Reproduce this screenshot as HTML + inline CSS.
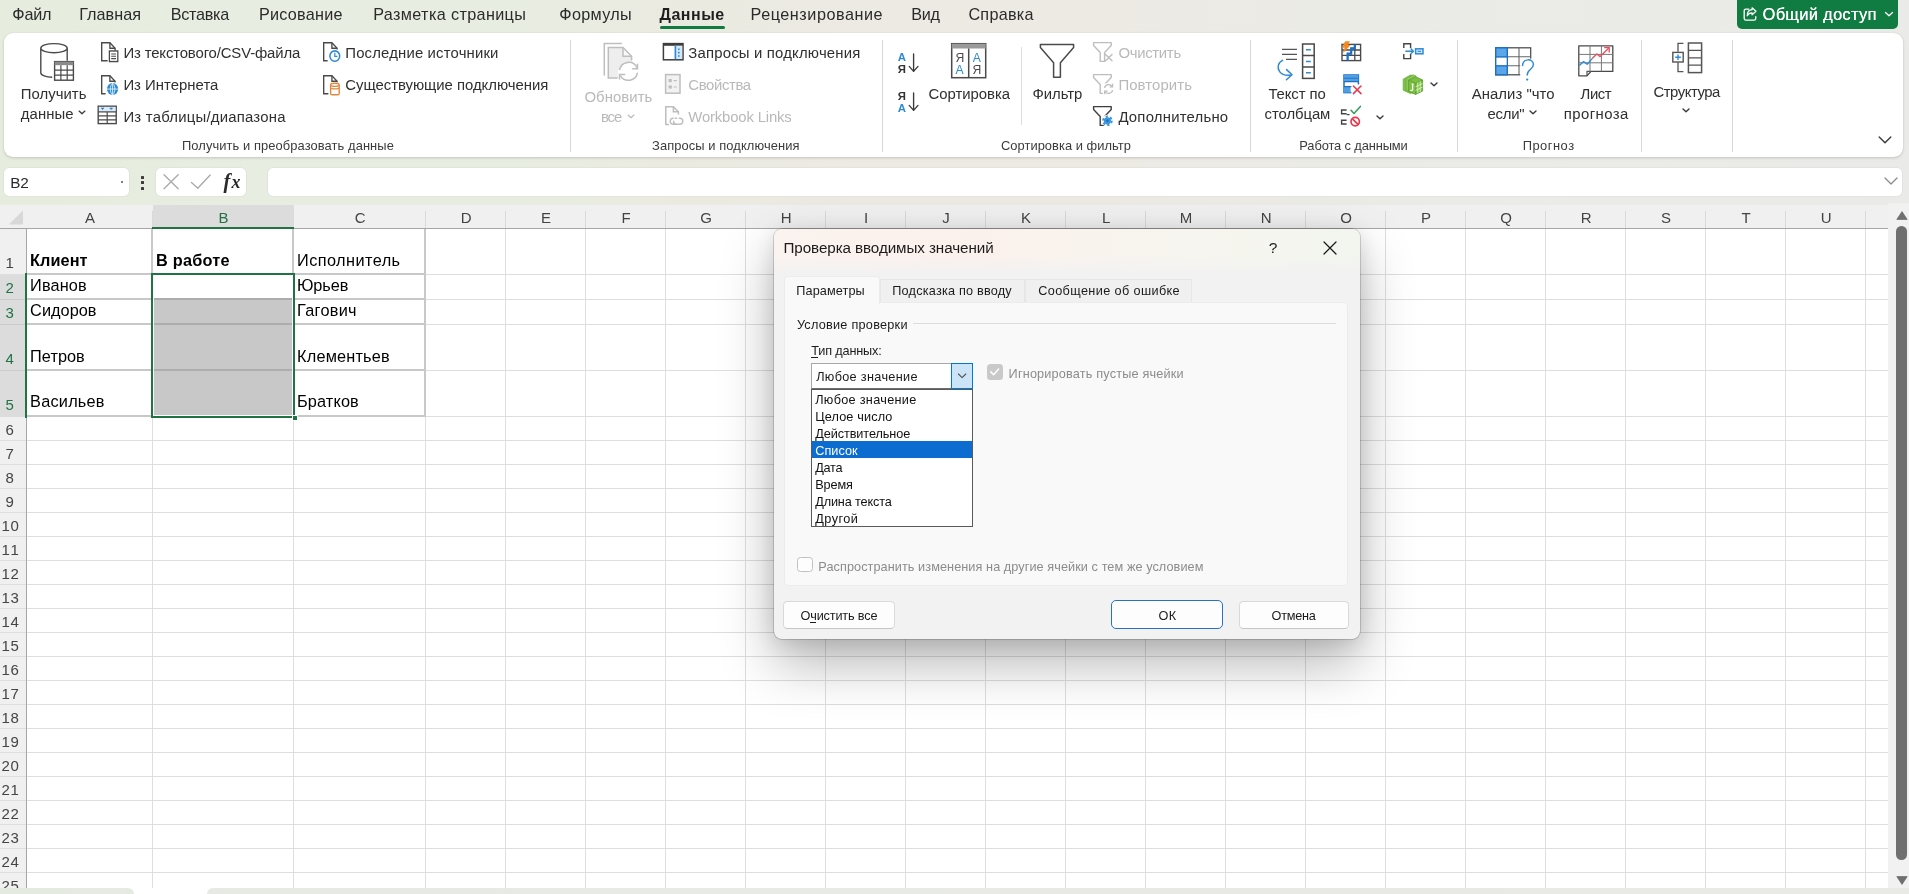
<!DOCTYPE html>
<html><head><meta charset="utf-8"><title>Excel</title>
<style>
html,body{margin:0;padding:0;}
body{width:1909px;height:894px;overflow:hidden;position:relative;background:#e9eee4;font-family:"Liberation Sans",sans-serif;}
.a{position:absolute;box-sizing:border-box;}
.t{position:absolute;white-space:nowrap;}
#w{position:absolute;left:0;top:0;width:1909px;height:894px;overflow:hidden;will-change:transform;}
</style></head><body><div id="w">
<div class="a" style="left:0.00px;top:0.00px;width:1909.00px;height:206.00px;background:linear-gradient(90deg,#e6eddf 0%,#e8ede1 27%,#ebeae1 36%,#edeae3 55%,#ebebe6 70%,#eaebe8 100%);"></div>
<div class="t" style="left:12.30px;top:6.00px;font-size:16.20px;line-height:16.20px;letter-spacing:-0.209px;color:#2b2b2b;font-family:'Liberation Sans',sans-serif;">Файл</div>
<div class="t" style="left:79.20px;top:6.00px;font-size:16.20px;line-height:16.20px;letter-spacing:0.040px;color:#2b2b2b;font-family:'Liberation Sans',sans-serif;">Главная</div>
<div class="t" style="left:170.80px;top:6.00px;font-size:16.20px;line-height:16.20px;letter-spacing:-0.302px;color:#2b2b2b;font-family:'Liberation Sans',sans-serif;">Вставка</div>
<div class="t" style="left:258.90px;top:6.00px;font-size:16.20px;line-height:16.20px;letter-spacing:0.252px;color:#2b2b2b;font-family:'Liberation Sans',sans-serif;">Рисование</div>
<div class="t" style="left:373.20px;top:6.00px;font-size:16.20px;line-height:16.20px;letter-spacing:0.365px;color:#2b2b2b;font-family:'Liberation Sans',sans-serif;">Разметка страницы</div>
<div class="t" style="left:559.30px;top:6.00px;font-size:16.20px;line-height:16.20px;letter-spacing:0.334px;color:#2b2b2b;font-family:'Liberation Sans',sans-serif;">Формулы</div>
<div class="t" style="left:750.50px;top:6.00px;font-size:16.20px;line-height:16.20px;letter-spacing:0.547px;color:#2b2b2b;font-family:'Liberation Sans',sans-serif;">Рецензирование</div>
<div class="t" style="left:911.30px;top:6.00px;font-size:16.20px;line-height:16.20px;letter-spacing:-0.304px;color:#2b2b2b;font-family:'Liberation Sans',sans-serif;">Вид</div>
<div class="t" style="left:968.40px;top:6.00px;font-size:16.20px;line-height:16.20px;letter-spacing:0.275px;color:#2b2b2b;font-family:'Liberation Sans',sans-serif;">Справка</div>
<div class="t" style="left:659.60px;top:7.00px;font-size:16.00px;line-height:16.00px;letter-spacing:0.483px;color:#1f1f1f;font-family:'Liberation Sans',sans-serif;font-weight:bold;">Данные</div>
<div class="a" style="left:659.50px;top:25.90px;width:65.00px;height:3.40px;background:#107c41;border-radius:1.7px;"></div>
<div class="a" style="left:1737.00px;top:-6.00px;width:161.00px;height:34.50px;background:#107c41;border-radius:5px;"></div>
<div class="t" style="left:1762.60px;top:6.00px;font-size:16.30px;line-height:16.30px;letter-spacing:0.389px;color:#ffffff;font-family:'Liberation Sans',sans-serif;text-shadow:0.25px 0 0 #fff;">Общий доступ</div>
<svg class="a" style="left:1741.60px;top:5.60px;" width="16.4" height="16.4" viewBox="0 0 15 15" fill="none"><path d="M6.2 2.8H3.6C2.7 2.8 2 3.5 2 4.4v7c0 .9.7 1.6 1.6 1.6h7.4c.9 0 1.6-.7 1.6-1.6V9.8" stroke="#fff" stroke-width="1.2" stroke-linecap="round"/><path d="M9.2 1.6l3.6 3.2-3.6 3.2V6.2C6.8 6.2 5.6 7.2 4.8 9c0-3.2 1.6-5.4 4.4-5.6z" stroke="#fff" stroke-width="1.1" stroke-linejoin="round"/></svg>
<svg class="a" style="left:1884.00px;top:10.00px;" width="10" height="8" viewBox="0 0 10 8" fill="none"><path d="M1.5 2.5L5 5.8 8.5 2.5" stroke="#fff" stroke-width="1.3" stroke-linecap="round" stroke-linejoin="round"/></svg>
<div class="a" style="left:3.50px;top:33.00px;width:1899.00px;height:124.00px;background:#ffffff;border-radius:9px;box-shadow:0 1px 3px rgba(0,0,0,0.16),0 0 1px rgba(0,0,0,0.10);"></div>
<div class="a" style="left:4.00px;top:168.00px;width:125.30px;height:28.20px;background:#fff;border-radius:5px;box-shadow:0 0 0 0.6px rgba(0,0,0,0.06);"></div>
<div class="t" style="left:10.20px;top:175.00px;font-size:15.30px;line-height:15.30px;letter-spacing:-0.115px;color:#2b2b2b;font-family:'Liberation Sans',sans-serif;">B2</div>
<div class="a" style="left:121.00px;top:181.30px;width:1.60px;height:1.60px;background:#555;border-radius:1px;"></div>
<div class="a" style="left:141.00px;top:176.20px;width:3.00px;height:3.00px;background:#3b3b3b;border-radius:0.6px;"></div>
<div class="a" style="left:141.00px;top:181.40px;width:3.00px;height:3.00px;background:#3b3b3b;border-radius:0.6px;"></div>
<div class="a" style="left:141.00px;top:186.60px;width:3.00px;height:3.00px;background:#3b3b3b;border-radius:0.6px;"></div>
<div class="a" style="left:155.60px;top:168.00px;width:90.60px;height:28.20px;background:#fff;border-radius:5px;box-shadow:0 0 0 0.6px rgba(0,0,0,0.06);"></div>
<svg class="a" style="left:160.00px;top:171.00px;" width="24" height="22" viewBox="0 0 24 22" fill="none"><path d="M4 3.8L18.2 17.8M18.2 3.8L4 17.8" stroke="#a9a9a9" stroke-width="1.3" stroke-linecap="round"/></svg>
<svg class="a" style="left:188.00px;top:171.00px;" width="26" height="22" viewBox="0 0 26 22" fill="none"><path d="M3.5 11.5L9.8 17.2 22.2 4" stroke="#a9a9a9" stroke-width="1.3" stroke-linecap="round" stroke-linejoin="round"/></svg>
<div class="t" style="left:223.40px;top:171.00px;font-size:20.50px;line-height:20.50px;letter-spacing:0.000px;color:#2a2a2a;font-family:'Liberation Serif',serif;font-style:italic;font-weight:bold;">f</div>
<div class="t" style="left:231.40px;top:173.00px;font-size:18.00px;line-height:18.00px;letter-spacing:0.000px;color:#2a2a2a;font-family:'Liberation Serif',serif;font-style:italic;font-weight:bold;">x</div>
<div class="a" style="left:268.00px;top:168.00px;width:1634.00px;height:28.20px;background:#fff;border-radius:5px;box-shadow:0 0 0 0.6px rgba(0,0,0,0.06);"></div>
<svg class="a" style="left:1883.00px;top:175.00px;" width="16" height="12" viewBox="0 0 16 12" fill="none"><path d="M2 3l6 6 6-6" stroke="#8a8a8a" stroke-width="1.3" stroke-linecap="round" stroke-linejoin="round"/></svg>
<div class="t" style="left:20.80px;top:87.00px;font-size:14.90px;line-height:14.90px;letter-spacing:0.030px;color:#303030;font-family:'Liberation Sans',sans-serif;">Получить</div>
<div class="t" style="left:20.80px;top:107.00px;font-size:14.90px;line-height:14.90px;letter-spacing:0.073px;color:#303030;font-family:'Liberation Sans',sans-serif;">данные</div>
<svg class="a" style="left:77.20px;top:108.40px;" width="10" height="8" viewBox="0 0 10 8" fill="none"><path d="M2.1 3.1L5 5.8 7.9 3.1" stroke="#3a3a3a" stroke-width="1.3" stroke-linecap="round" stroke-linejoin="round"/></svg>
<svg class="a" style="left:38.00px;top:41.00px;" width="38" height="42" viewBox="0 0 38 42" fill="none"><path d="M2.8 7.2v24.5c0 2.6 5.2 4.4 11.4 4.6" stroke="#4a4a4a" stroke-width="1.4"/><path d="M29.2 7.2v12.6" stroke="#4a4a4a" stroke-width="1.4"/><ellipse cx="16" cy="7.2" rx="13.2" ry="4.6" stroke="#4a4a4a" stroke-width="1.4" fill="#fff"/>
<rect x="16.6" y="20.6" width="18.8" height="18.6" fill="#fff" stroke="#4a4a4a" stroke-width="1.4"/><rect x="16.6" y="20.6" width="18.8" height="3.6" fill="#8a8a8a"/><path d="M16.6 29.2h18.8M16.6 34.2h18.8M22.9 24.2v15M29.2 24.2v15" stroke="#4a4a4a" stroke-width="1.2"/></svg>
<svg class="a" style="left:99.50px;top:41.40px;transform:scaleY(1.06);transform-origin:0 0;" width="20" height="21" viewBox="0 0 20 21" fill="none"><path d="M7.6 18.6H1.7V1.7h8.2l5.2 5.2v2.2" stroke="#4a4a4a" stroke-width="1.35" stroke-linejoin="miter"/><path d="M9.9 1.7v5.2h5.2" stroke="#4a4a4a" stroke-width="1.35"/><rect x="9.4" y="9.4" width="8.4" height="10" fill="#fff" stroke="#4a4a4a" stroke-width="1.3"/><path d="M11.2 12.2h4.8M11.2 14.4h4.8M11.2 16.6h4.8" stroke="#4a4a4a" stroke-width="1"/></svg>
<div class="t" style="left:123.40px;top:46.00px;font-size:14.90px;line-height:14.90px;letter-spacing:-0.132px;color:#303030;font-family:'Liberation Sans',sans-serif;">Из текстового/CSV-файла</div>
<svg class="a" style="left:99.50px;top:73.60px;transform:scaleY(1.06);transform-origin:0 0;" width="20" height="21" viewBox="0 0 20 21" fill="none"><path d="M5.6 18.6H1.7V1.7h8.2l5.2 5.2v1.2" stroke="#4a4a4a" stroke-width="1.35" stroke-linejoin="miter"/><path d="M9.9 1.7v5.2h5.2" stroke="#4a4a4a" stroke-width="1.35"/><circle cx="12.6" cy="14.2" r="5.6" fill="#2b8ad6"/><path d="M7 14.2h11.2M12.6 8.6v11.2M12.6 8.6c-3 2.6-3 8.6 0 11.2M12.6 8.6c3 2.6 3 8.6 0 11.2" stroke="#d9ecfa" stroke-width="0.9"/></svg>
<div class="t" style="left:123.40px;top:78.00px;font-size:14.90px;line-height:14.90px;letter-spacing:0.017px;color:#303030;font-family:'Liberation Sans',sans-serif;">Из Интернета</div>
<svg class="a" style="left:97.20px;top:105.40px;" width="21" height="20" viewBox="0 0 21 20" fill="none"><rect x="1.2" y="1.2" width="18" height="17.4" fill="#fff" stroke="#4a4a4a" stroke-width="1.4"/><rect x="1.9" y="1.9" width="16.6" height="4.4" fill="#dcebf8"/><path d="M4.2 3l1.4 1.6L7 3zM12.8 3l1.4 1.6L15.6 3z" fill="#2b7fc6" stroke="#2b7fc6" stroke-width="0.6"/><path d="M1.2 6.8h18M1.2 10.8h18M1.2 14.8h18M10.2 6.8v11.8" stroke="#4a4a4a" stroke-width="1.2"/></svg>
<div class="t" style="left:123.40px;top:110.00px;font-size:14.90px;line-height:14.90px;letter-spacing:0.229px;color:#303030;font-family:'Liberation Sans',sans-serif;">Из таблицы/диапазона</div>
<svg class="a" style="left:321.50px;top:41.40px;transform:scaleY(1.06);transform-origin:0 0;" width="20" height="21" viewBox="0 0 20 21" fill="none"><path d="M5.6 18.6H1.7V1.7h8.2l5.2 5.2v1.2" stroke="#4a4a4a" stroke-width="1.35" stroke-linejoin="miter"/><path d="M9.9 1.7v5.2h5.2" stroke="#4a4a4a" stroke-width="1.35"/><circle cx="12.8" cy="14.2" r="4.9" fill="#fff" stroke="#2b8ad6" stroke-width="1.5"/><path d="M12.8 11.2v3.2h2.6" stroke="#2b8ad6" stroke-width="1.2"/></svg>
<div class="t" style="left:345.30px;top:46.00px;font-size:14.90px;line-height:14.90px;letter-spacing:0.160px;color:#303030;font-family:'Liberation Sans',sans-serif;">Последние источники</div>
<svg class="a" style="left:321.50px;top:73.60px;transform:scaleY(1.06);transform-origin:0 0;" width="20" height="21" viewBox="0 0 20 21" fill="none"><path d="M6.4 18.6H1.7V1.7h8.2l5.2 5.2v0.8" stroke="#4a4a4a" stroke-width="1.35" stroke-linejoin="miter"/><path d="M9.9 1.7v5.2h5.2" stroke="#4a4a4a" stroke-width="1.35"/><path d="M8.6 10.2v8.4c0 1.4 8.6 1.4 8.6 0v-8.4" fill="#fff" stroke="#e3873b" stroke-width="1.4"/><ellipse cx="12.9" cy="10.2" rx="4.3" ry="1.5" fill="#fff" stroke="#e3873b" stroke-width="1.3"/><path d="M8.6 13c0 1.4 8.6 1.4 8.6 0" stroke="#e3873b" stroke-width="1.2"/></svg>
<div class="t" style="left:345.30px;top:78.00px;font-size:14.90px;line-height:14.90px;letter-spacing:-0.026px;color:#303030;font-family:'Liberation Sans',sans-serif;">Существующие подключения</div>
<div class="t" style="left:182.00px;top:140.00px;font-size:12.90px;line-height:12.90px;letter-spacing:0.089px;color:#3b3b3b;font-family:'Liberation Sans',sans-serif;">Получить и преобразовать данные</div>
<div class="a" style="left:569.60px;top:40.00px;width:1.00px;height:111.50px;background:#d8d8d8;"></div>
<svg class="a" style="left:600.00px;top:40.00px;" width="42" height="44" viewBox="0 0 42 44" fill="none"><path d="M21.9 3.6H4.3v31.9" stroke="#bebebe" stroke-width="1.5" fill="none"/><path d="M8.3 7.5H23l8.600 8.700v6l-8 2-5.600 6-0.300 7.800H8.300z" fill="#eeeeee"/><path d="M23 7.500v8.700h8.600" stroke="#bebebe" stroke-width="1.5" fill="#fafafa"/><path d="M17.700 38H8.300V7.500H23l8.600 8.700v4.200" stroke="#bebebe" stroke-width="1.5" fill="none"/>
<path d="M19.600 30.100A9.200 9.200 0 0 1 37 27.600M37.500 32.700A9.200 9.200 0 0 1 20.400 35.600" stroke="#bebebe" stroke-width="1.500" fill="none"/><path d="M37.500 23.700v5.100h-5.300M19.500 39.400v-5h5.800" stroke="#bebebe" stroke-width="1.500" fill="none"/></svg>
<div class="t" style="left:584.40px;top:90.00px;font-size:14.90px;line-height:14.90px;letter-spacing:0.076px;color:#b9b9b9;font-family:'Liberation Sans',sans-serif;">Обновить</div>
<div class="t" style="left:600.90px;top:110.00px;font-size:14.90px;line-height:14.90px;letter-spacing:-1.092px;color:#b9b9b9;font-family:'Liberation Sans',sans-serif;">все</div>
<svg class="a" style="left:626.20px;top:111.60px;" width="10" height="8" viewBox="0 0 10 8" fill="none"><path d="M2.1 3.1L5 5.8 7.9 3.1" stroke="#bdbdbd" stroke-width="1.3" stroke-linecap="round" stroke-linejoin="round"/></svg>
<svg class="a" style="left:662.00px;top:42.40px;" width="23" height="20" viewBox="0 0 23 20" fill="none"><rect x="1.4" y="1.6" width="19.6" height="16.2" fill="#fff" stroke="#3e3e3e" stroke-width="1.5"/><rect x="1.4" y="1.2" width="19.6" height="2.6" fill="#3e3e3e"/><rect x="12.6" y="3.8" width="7.6" height="13.2" fill="#d4e8f8"/><path d="M13.4 3.8v13.4" stroke="#2b8ad6" stroke-width="1.6"/><path d="M16.8 6.4v1.6M16.8 9.8v1.6M16.8 13.2v1.6" stroke="#2b8ad6" stroke-width="1.6"/></svg>
<div class="t" style="left:688.30px;top:46.00px;font-size:14.90px;line-height:14.90px;letter-spacing:0.189px;color:#303030;font-family:'Liberation Sans',sans-serif;">Запросы и подключения</div>
<svg class="a" style="left:664.00px;top:73.00px;" width="18" height="22" viewBox="0 0 18 22" fill="none"><rect x="1.6" y="1.6" width="14.4" height="18.6" fill="#f2f2f2" stroke="#bebebe" stroke-width="1.5"/><rect x="4.6" y="6" width="3.2" height="3.2" fill="#bebebe"/><rect x="4.6" y="12.4" width="3.2" height="3.2" fill="#bebebe"/><path d="M9.6 7.6h3.2M9.6 14h3.2" stroke="#bebebe" stroke-width="1.2"/></svg>
<div class="t" style="left:688.30px;top:78.00px;font-size:14.90px;line-height:14.90px;letter-spacing:-0.361px;color:#b9b9b9;font-family:'Liberation Sans',sans-serif;">Свойства</div>
<svg class="a" style="left:664.00px;top:105.00px;" width="21" height="22" viewBox="0 0 21 22" fill="none"><path d="M5 19.4H1.8V1.8h7.6l5 5v2.6" stroke="#bebebe" stroke-width="1.5"/><path d="M9.4 1.8v5h5" stroke="#bebebe" stroke-width="1.5"/><path d="M9.2 13.2a3 3 0 1 0 0 6h2.4M15.2 13.2h0.6a3 3 0 1 1 0 6h-3.6a3 3 0 0 1-2.6-3M12.6 13.2h-1.4" stroke="#bebebe" stroke-width="1.4" fill="none" stroke-linecap="round"/></svg>
<div class="t" style="left:688.30px;top:110.00px;font-size:14.90px;line-height:14.90px;letter-spacing:-0.171px;color:#b9b9b9;font-family:'Liberation Sans',sans-serif;">Workbook Links</div>
<div class="t" style="left:652.00px;top:140.00px;font-size:12.90px;line-height:12.90px;letter-spacing:0.094px;color:#3b3b3b;font-family:'Liberation Sans',sans-serif;">Запросы и подключения</div>
<div class="a" style="left:882.00px;top:40.00px;width:1.00px;height:111.50px;background:#d8d8d8;"></div>
<div class="t" style="left:897.80px;top:52.00px;font-size:11.40px;line-height:11.40px;letter-spacing:0.000px;color:#2e8bd3;font-family:'Liberation Sans',sans-serif;font-weight:bold;">А</div>
<div class="t" style="left:897.80px;top:64.00px;font-size:11.40px;line-height:11.40px;letter-spacing:0.000px;color:#333;font-family:'Liberation Sans',sans-serif;font-weight:bold;">Я</div>
<svg class="a" style="left:906.50px;top:51.60px;" width="13" height="22" viewBox="0 0 13 22" fill="none"><path d="M6.6 2v17.4M2.2 14.4l4.4 5 4.4-5" stroke="#3a3a3a" stroke-width="1.35" stroke-linecap="round" stroke-linejoin="round"/></svg>
<div class="t" style="left:897.80px;top:91.00px;font-size:11.40px;line-height:11.40px;letter-spacing:0.000px;color:#333;font-family:'Liberation Sans',sans-serif;font-weight:bold;">Я</div>
<div class="t" style="left:897.80px;top:103.00px;font-size:11.40px;line-height:11.40px;letter-spacing:0.000px;color:#2e8bd3;font-family:'Liberation Sans',sans-serif;font-weight:bold;">А</div>
<svg class="a" style="left:906.50px;top:90.60px;" width="13" height="22" viewBox="0 0 13 22" fill="none"><path d="M6.6 2v17.4M2.2 14.4l4.4 5 4.4-5" stroke="#3a3a3a" stroke-width="1.35" stroke-linecap="round" stroke-linejoin="round"/></svg>
<svg class="a" style="left:950.40px;top:42.20px;" width="38" height="38" viewBox="0 0 38 38" fill="none"><rect x="1.7" y="1.7" width="34" height="34" fill="#fff" stroke="#4a4a4a" stroke-width="1.5"/><rect x="1.7" y="1.7" width="34" height="4.8" fill="#9a9a9a"/><path d="M18.7 6.5v29.2" stroke="#4a4a4a" stroke-width="1.5"/></svg>
<div class="t" style="left:955.40px;top:52.00px;font-size:12.20px;line-height:12.20px;letter-spacing:0.000px;color:#4a4a4a;font-family:'Liberation Sans',sans-serif;">Я</div>
<div class="t" style="left:955.60px;top:64.00px;font-size:12.20px;line-height:12.20px;letter-spacing:0.000px;color:#2e8bd3;font-family:'Liberation Sans',sans-serif;">А</div>
<div class="t" style="left:972.80px;top:52.00px;font-size:12.20px;line-height:12.20px;letter-spacing:0.000px;color:#2e8bd3;font-family:'Liberation Sans',sans-serif;">А</div>
<div class="t" style="left:972.60px;top:64.00px;font-size:12.20px;line-height:12.20px;letter-spacing:0.000px;color:#4a4a4a;font-family:'Liberation Sans',sans-serif;">Я</div>
<div class="t" style="left:928.40px;top:87.00px;font-size:14.90px;line-height:14.90px;letter-spacing:0.002px;color:#303030;font-family:'Liberation Sans',sans-serif;">Сортировка</div>
<div class="a" style="left:1021.40px;top:46.50px;width:1.00px;height:78.00px;background:#dedede;"></div>
<svg class="a" style="left:1037.60px;top:41.60px;" width="38" height="38" viewBox="0 0 38 38" fill="none"><path d="M2.4 2.4h33.2v3.2L22.4 20.8v14.4h-6.8V20.8L2.4 5.6z" fill="#fff" stroke="#4a4a4a" stroke-width="1.5" stroke-linejoin="round"/></svg>
<div class="t" style="left:1032.50px;top:87.00px;font-size:14.90px;line-height:14.90px;letter-spacing:-0.031px;color:#303030;font-family:'Liberation Sans',sans-serif;">Фильтр</div>
<svg class="a" style="left:1092.40px;top:40.60px;" width="23" height="23" viewBox="0 0 23 23" fill="none"><path d="M1.6 1.6h17.6v3l-6.6 6.8v9h-4.4v-9L1.6 4.6z" fill="#fff" stroke="#bebebe" stroke-width="1.4" stroke-linejoin="round"/><path d="M13.6 13.4l6.4 6.4M20 13.4l-6.4 6.4" stroke="#bebebe" stroke-width="1.4" stroke-linecap="round"/></svg>
<div class="t" style="left:1118.40px;top:46.00px;font-size:14.90px;line-height:14.90px;letter-spacing:-0.295px;color:#b9b9b9;font-family:'Liberation Sans',sans-serif;">Очистить</div>
<svg class="a" style="left:1092.40px;top:72.60px;" width="23" height="23" viewBox="0 0 23 23" fill="none"><path d="M1.6 1.6h17.6v3l-6.6 6.8v9h-4.4v-9L1.6 4.6z" fill="#fff" stroke="#bebebe" stroke-width="1.4" stroke-linejoin="round"/><rect x="11" y="10.4" width="11" height="11" fill="#fff"/><path d="M12.6 15a4.2 4.2 0 0 1 7.6-1.6M20.6 17a4.2 4.2 0 0 1-7.6 1.6" stroke="#bebebe" stroke-width="1.3" fill="none"/><path d="M20.6 10.8v3h-3M12.6 21.2v-3h3" stroke="#bebebe" stroke-width="1.3" fill="none"/></svg>
<div class="t" style="left:1118.40px;top:78.00px;font-size:14.90px;line-height:14.90px;letter-spacing:0.109px;color:#b9b9b9;font-family:'Liberation Sans',sans-serif;">Повторить</div>
<svg class="a" style="left:1092.40px;top:104.60px;" width="23" height="23" viewBox="0 0 23 23" fill="none"><path d="M1.6 1.6h17.6v3l-6.6 6.8v9h-4.4v-9L1.6 4.6z" fill="#fff" stroke="#3e3e3e" stroke-width="1.4" stroke-linejoin="round"/><circle cx="15.4" cy="15.8" r="6.0" fill="#fff"/><circle cx="15.4" cy="15.8" r="4.3" fill="none" stroke="#3a96dd" stroke-width="2.0" stroke-dasharray="2.25 2.253"/><circle cx="15.4" cy="15.8" r="3.6" fill="#3a96dd"/><circle cx="15.4" cy="15.8" r="1.3" fill="#1f6fc0"/></svg>
<div class="t" style="left:1118.40px;top:110.00px;font-size:14.90px;line-height:14.90px;letter-spacing:0.213px;color:#303030;font-family:'Liberation Sans',sans-serif;">Дополнительно</div>
<div class="t" style="left:1001.00px;top:140.00px;font-size:12.90px;line-height:12.90px;letter-spacing:0.038px;color:#3b3b3b;font-family:'Liberation Sans',sans-serif;">Сортировка и фильтр</div>
<div class="a" style="left:1250.00px;top:40.00px;width:1.00px;height:111.50px;background:#d8d8d8;"></div>
<svg class="a" style="left:1275.00px;top:41.60px;" width="42" height="40" viewBox="0 0 42 40" fill="none"><path d="M7 7.4h15M7 12.4h15M11 17.4h11" stroke="#555" stroke-width="1.4"/>
<path d="M7.6 18.4c-4.6 2-5.8 7.6-3 11.2 2.6 3.4 7.4 4 11.6 3.4" stroke="#2e8bd3" stroke-width="1.5" fill="none" stroke-linecap="round"/><path d="M11.6 27.6l5.4 5.2-5.6 5" stroke="#2e8bd3" stroke-width="1.5" fill="none" stroke-linecap="round" stroke-linejoin="round"/>
<rect x="27.6" y="2" width="11.6" height="34.4" fill="#fff" stroke="#4a4a4a" stroke-width="1.5"/><path d="M27.6 13.6h11.6M27.6 25h11.6" stroke="#4a4a4a" stroke-width="1.5"/><path d="M31 7.8h4.8M31 19.4h4.8M31 30.8h4.8" stroke="#2e8bd3" stroke-width="1.5"/></svg>
<div class="t" style="left:1268.40px;top:87.00px;font-size:14.90px;line-height:14.90px;letter-spacing:-0.087px;color:#303030;font-family:'Liberation Sans',sans-serif;">Текст по</div>
<div class="t" style="left:1264.60px;top:107.00px;font-size:14.90px;line-height:14.90px;letter-spacing:-0.080px;color:#303030;font-family:'Liberation Sans',sans-serif;">столбцам</div>
<svg class="a" style="left:1339.60px;top:40.60px;" width="23" height="22" viewBox="0 0 23 22" fill="none"><rect x="2" y="3.4" width="18.6" height="16.2" fill="#fff" stroke="#4a4a4a" stroke-width="1.4"/><path d="M2 9h18.6M2 14.4h18.6M14.8 3.4v16.2" stroke="#4a4a4a" stroke-width="1.3"/><path d="M7.6 19.6v-7h3.6V7.4h3.6V3.4" stroke="#1f6fc0" stroke-width="2.2" fill="none"/><path d="M7.6 19.6v-7h3.6V7.4h3.6" stroke="#1f6fc0" stroke-width="1.2" fill="none"/><path d="M5.2 0.6h4.4L7.4 4.2h2.8L3.4 11.6l1.6-5H2.4z" fill="#f08a24" stroke="#f08a24" stroke-width="0.5" stroke-linejoin="round"/></svg>
<svg class="a" style="left:1341.60px;top:72.80px;" width="23" height="23" viewBox="0 0 23 23" fill="none"><rect x="2" y="2" width="14.4" height="17.6" fill="#fff" stroke="#1f6fc0" stroke-width="1.5"/><rect x="2" y="2" width="14.4" height="6.4" fill="#4f9fe6"/><path d="M2 5.2h14.4" stroke="#1f6fc0" stroke-width="0.9"/><rect x="2" y="13.6" width="6.6" height="6" fill="#4f9fe6"/><path d="M2 8.6h14.4M2 13.6h8" stroke="#1f6fc0" stroke-width="1.4"/><rect x="9.4" y="11.4" width="11" height="10" fill="#fff"/><path d="M11.4 13l7.6 7.6M19 13l-7.6 7.6" stroke="#e8384f" stroke-width="1.5" stroke-linecap="round"/></svg>
<svg class="a" style="left:1339.60px;top:104.60px;" width="23" height="23" viewBox="0 0 23 23" fill="none"><path d="M6.6 5H1.6v3.8h5M6.6 15.2H1.6V19h5" stroke="#444" stroke-width="1.4" fill="none"/><path d="M6.6 9.6h3" stroke="#444" stroke-width="1.2"/><path d="M11 5.2l3 3.2 6.4-7" stroke="#2f9d57" stroke-width="1.5" fill="none" stroke-linecap="round" stroke-linejoin="round"/><circle cx="15.2" cy="16.6" r="4.2" fill="#fff" stroke="#e8384f" stroke-width="1.7"/><path d="M12.4 13.8l5.6 5.6" stroke="#e8384f" stroke-width="1.7"/></svg>
<svg class="a" style="left:1375.40px;top:112.60px;" width="10" height="8" viewBox="0 0 10 8" fill="none"><path d="M2.0 3.0L5 5.8 8.0 3.0" stroke="#3a3a3a" stroke-width="1.4" stroke-linecap="round" stroke-linejoin="round"/></svg>
<svg class="a" style="left:1401.60px;top:42.00px;" width="24" height="19" viewBox="0 0 24 19" fill="none"><path d="M8.6 6V1.8H1.8V6M1.8 12v4.6h6.8V12" stroke="#444" stroke-width="1.4" fill="none"/><path d="M1.8 6.2v0" stroke="#444"/><path d="M3.4 9.2h7.6M8.6 6.4l2.8 2.8-2.8 2.8" stroke="#2e8bd3" stroke-width="1.4" fill="none" stroke-linejoin="round"/><rect x="13.6" y="6.8" width="7.4" height="5" fill="#cfe5f8" stroke="#2e8bd3" stroke-width="1.5"/><path d="M15.6 9.3h3.4" stroke="#2e8bd3" stroke-width="1.2"/></svg>
<svg class="a" style="left:1401.40px;top:72.60px;" width="24" height="23" viewBox="0 0 24 23" fill="none"><path d="M2.2 6.2L9.6 2l3 1.2v15.8l-3 1.6-7.4-3.4z" fill="#7fbf4a" stroke="#6aae3a" stroke-width="0.8"/><path d="M5 5.4L12 1.8l3 1.2v15.6l-3 1.6-7-3.2z" fill="#8cc85a" stroke="#6aae3a" stroke-width="0.8" opacity="0.95"/><path d="M7.6 7.2l7-3.4 7 3.2v11l-7 3.4-7-3.2z" fill="#7cc043" stroke="#5ea030" stroke-width="0.9"/><path d="M14.6 10.2l7-3.2M14.6 10.2v11.2M7.6 7.2l7 3" stroke="#5ea030" stroke-width="0.8"/><path d="M16.8 9.4v10.8M19.2 8.2v10.8M14.6 13.8l7-3.2M14.6 17.4l7-3.2" stroke="#d9efc6" stroke-width="0.9"/><path d="M11.6 11.6v4.6c0 1-.8 1.6-1.8 1.2" stroke="#fff" stroke-width="1.3" fill="none" stroke-linecap="round"/><path d="M10.6 11.2h2" stroke="#fff" stroke-width="1.2"/></svg>
<svg class="a" style="left:1429.20px;top:80.40px;" width="10" height="8" viewBox="0 0 10 8" fill="none"><path d="M2.0 3.0L5 5.8 8.0 3.0" stroke="#3a3a3a" stroke-width="1.4" stroke-linecap="round" stroke-linejoin="round"/></svg>
<div class="t" style="left:1299.30px;top:140.00px;font-size:12.90px;line-height:12.90px;letter-spacing:-0.126px;color:#3b3b3b;font-family:'Liberation Sans',sans-serif;">Работа с данными</div>
<div class="a" style="left:1457.40px;top:40.00px;width:1.00px;height:111.50px;background:#d8d8d8;"></div>
<svg class="a" style="left:1493.60px;top:45.60px;" width="42" height="37" viewBox="0 0 42 37" fill="none"><rect x="1.7" y="1.8" width="35" height="27" fill="#fff" stroke="#4a4a4a" stroke-width="1.25"/><path d="M1.7 10.8h35M1.7 19.8h35M25 1.8v27" stroke="#666" stroke-width="1.1"/><rect x="1.7" y="1.8" width="11.6" height="27" fill="#5aa6ea" stroke="#1f6fc0" stroke-width="1.4"/><rect x="2.5" y="11.4" width="10.1" height="7.8" fill="#fff"/><path d="M1.7 10.8h11.6M1.7 19.8h11.6" stroke="#1f6fc0" stroke-width="1.3"/><rect x="26.2" y="12.6" width="15" height="24" fill="#fff"/><path d="M28.6 19.6c0-7.6 10.8-7.4 10.8-1 0 4.8-6.2 4.6-6.2 10.4" stroke="#2e8bd3" stroke-width="1.45" fill="none" stroke-linecap="round"/><circle cx="33.2" cy="33.6" r="1.15" fill="#2e8bd3"/></svg>
<div class="t" style="left:1471.80px;top:87.00px;font-size:14.90px;line-height:14.90px;letter-spacing:0.036px;color:#303030;font-family:'Liberation Sans',sans-serif;">Анализ &quot;что</div>
<div class="t" style="left:1487.60px;top:107.00px;font-size:14.90px;line-height:14.90px;letter-spacing:-0.261px;color:#303030;font-family:'Liberation Sans',sans-serif;">если&quot;</div>
<svg class="a" style="left:1528.40px;top:108.40px;" width="10" height="8" viewBox="0 0 10 8" fill="none"><path d="M2.0 3.0L5 5.8 8.0 3.0" stroke="#3a3a3a" stroke-width="1.4" stroke-linecap="round" stroke-linejoin="round"/></svg>
<svg class="a" style="left:1577.00px;top:44.00px;" width="38" height="34" viewBox="0 0 38 34" fill="none"><path d="M1.8 1.8h34v25.6H14l-4 4.400H1.8z" fill="#fff" stroke="#4a4a4a" stroke-width="1.3" stroke-linejoin="round"/><path d="M10 31.6v-4.200h4" stroke="#555" stroke-width="1.2" fill="none"/><path d="M1.8 10.4h34M1.8 18.800h34M13 1.8v25.6M24.4 1.8v25.6" stroke="#777" stroke-width="1.0"/><path d="M2.400 21.600l4.200-4 3.600 2.600 5-5.600" stroke="#2e8bd3" stroke-width="1.35" fill="none" stroke-linejoin="round"/><path d="M15.2 14.600l4.600-4.600 3.400 2.600 8.400-8.400" stroke="#e8505f" stroke-width="1.35" fill="none" stroke-linejoin="round"/><path d="M27.200 3.600h5v5" stroke="#e8505f" stroke-width="1.35" fill="none"/></svg>
<div class="t" style="left:1580.60px;top:87.00px;font-size:14.90px;line-height:14.90px;letter-spacing:-0.459px;color:#303030;font-family:'Liberation Sans',sans-serif;">Лист</div>
<div class="t" style="left:1563.80px;top:107.00px;font-size:14.90px;line-height:14.90px;letter-spacing:0.437px;color:#303030;font-family:'Liberation Sans',sans-serif;">прогноза</div>
<div class="t" style="left:1522.70px;top:140.00px;font-size:12.90px;line-height:12.90px;letter-spacing:0.501px;color:#3b3b3b;font-family:'Liberation Sans',sans-serif;">Прогноз</div>
<div class="a" style="left:1641.20px;top:40.00px;width:1.00px;height:111.50px;background:#d8d8d8;"></div>
<svg class="a" style="left:1670.60px;top:41.20px;" width="33" height="34" viewBox="0 0 33 34" fill="none"><path d="M12.400 2.400H7v8.400M7 21.200v9.400h5.400" stroke="#555" stroke-width="1.3" fill="none"/><rect x="1.8" y="11.400" width="10.400" height="9.600" fill="#fff" stroke="#555" stroke-width="1.4"/><path d="M4.200 16.200h5.600M7 13.400v5.600" stroke="#2e8bd3" stroke-width="1.400"/><rect x="17.400" y="2" width="13.200" height="29.600" fill="#fff" stroke="#555" stroke-width="1.5"/><path d="M17.400 9.400h13.200M17.400 16.800h13.200M17.400 24.200h13.200" stroke="#555" stroke-width="1.3"/></svg>
<div class="t" style="left:1653.40px;top:85.00px;font-size:14.90px;line-height:14.90px;letter-spacing:-0.461px;color:#303030;font-family:'Liberation Sans',sans-serif;">Структура</div>
<svg class="a" style="left:1680.80px;top:106.40px;" width="10" height="8" viewBox="0 0 10 8" fill="none"><path d="M2.0 3.0L5 5.8 8.0 3.0" stroke="#3a3a3a" stroke-width="1.4" stroke-linecap="round" stroke-linejoin="round"/></svg>
<div class="a" style="left:1732.20px;top:40.00px;width:1.00px;height:111.50px;background:#d8d8d8;"></div>
<svg class="a" style="left:1877.00px;top:134.40px;" width="16" height="12" viewBox="0 0 16 12" fill="none"><path d="M2.2 3l5.800 5.800L13.800 3" stroke="#3a3a3a" stroke-width="1.4" stroke-linecap="round" stroke-linejoin="round"/></svg>
<div class="a" style="left:0.00px;top:205.00px;width:1888.00px;height:683.00px;background:#ffffff;"></div>
<div class="a" style="left:0.00px;top:205.00px;width:1888.00px;height:24.00px;background:#f0f0f0;"></div>
<div class="a" style="left:0.00px;top:205.00px;width:27.00px;height:683.00px;background:#f0f0f0;"></div>
<div class="a" style="left:1888.00px;top:203.00px;width:21.00px;height:685.00px;background:#f1f1f1;"></div>
<div class="a" style="left:1896.00px;top:226.40px;width:10.60px;height:634.00px;background:#6f6f6f;border-radius:5.3px;"></div>
<svg class="a" style="left:1894.50px;top:210.00px;" width="14" height="11" viewBox="0 0 14 11" fill="none"><path d="M7 1.6l5.2 7.8H1.8z" fill="#6f6f6f" stroke="#6f6f6f" stroke-width="0.8" stroke-linejoin="round"/></svg>
<svg class="a" style="left:1894.50px;top:875.00px;" width="14" height="11" viewBox="0 0 14 11" fill="none"><path d="M7 9.4L1.8 1.6h10.4z" fill="#6f6f6f" stroke="#6f6f6f" stroke-width="0.8" stroke-linejoin="round"/></svg>
<div class="a" style="left:152.00px;top:229.00px;width:1.00px;height:659.00px;background:#dedede;"></div>
<div class="a" style="left:293.00px;top:229.00px;width:1.00px;height:659.00px;background:#dedede;"></div>
<div class="a" style="left:425.00px;top:229.00px;width:1.00px;height:659.00px;background:#dedede;"></div>
<div class="a" style="left:505.00px;top:229.00px;width:1.00px;height:659.00px;background:#dedede;"></div>
<div class="a" style="left:585.00px;top:229.00px;width:1.00px;height:659.00px;background:#dedede;"></div>
<div class="a" style="left:665.00px;top:229.00px;width:1.00px;height:659.00px;background:#dedede;"></div>
<div class="a" style="left:745.00px;top:229.00px;width:1.00px;height:659.00px;background:#dedede;"></div>
<div class="a" style="left:825.00px;top:229.00px;width:1.00px;height:659.00px;background:#dedede;"></div>
<div class="a" style="left:905.00px;top:229.00px;width:1.00px;height:659.00px;background:#dedede;"></div>
<div class="a" style="left:985.00px;top:229.00px;width:1.00px;height:659.00px;background:#dedede;"></div>
<div class="a" style="left:1065.00px;top:229.00px;width:1.00px;height:659.00px;background:#dedede;"></div>
<div class="a" style="left:1145.00px;top:229.00px;width:1.00px;height:659.00px;background:#dedede;"></div>
<div class="a" style="left:1225.00px;top:229.00px;width:1.00px;height:659.00px;background:#dedede;"></div>
<div class="a" style="left:1305.00px;top:229.00px;width:1.00px;height:659.00px;background:#dedede;"></div>
<div class="a" style="left:1385.00px;top:229.00px;width:1.00px;height:659.00px;background:#dedede;"></div>
<div class="a" style="left:1465.00px;top:229.00px;width:1.00px;height:659.00px;background:#dedede;"></div>
<div class="a" style="left:1545.00px;top:229.00px;width:1.00px;height:659.00px;background:#dedede;"></div>
<div class="a" style="left:1625.00px;top:229.00px;width:1.00px;height:659.00px;background:#dedede;"></div>
<div class="a" style="left:1705.00px;top:229.00px;width:1.00px;height:659.00px;background:#dedede;"></div>
<div class="a" style="left:1785.00px;top:229.00px;width:1.00px;height:659.00px;background:#dedede;"></div>
<div class="a" style="left:1865.00px;top:229.00px;width:1.00px;height:659.00px;background:#dedede;"></div>
<div class="a" style="left:27.00px;top:274.00px;width:1861.00px;height:1.00px;background:#dedede;"></div>
<div class="a" style="left:27.00px;top:299.00px;width:1861.00px;height:1.00px;background:#dedede;"></div>
<div class="a" style="left:27.00px;top:324.00px;width:1861.00px;height:1.00px;background:#dedede;"></div>
<div class="a" style="left:27.00px;top:370.00px;width:1861.00px;height:1.00px;background:#dedede;"></div>
<div class="a" style="left:27.00px;top:416.00px;width:1861.00px;height:1.00px;background:#dedede;"></div>
<div class="a" style="left:27.00px;top:440.00px;width:1861.00px;height:1.00px;background:#dedede;"></div>
<div class="a" style="left:27.00px;top:464.00px;width:1861.00px;height:1.00px;background:#dedede;"></div>
<div class="a" style="left:27.00px;top:488.00px;width:1861.00px;height:1.00px;background:#dedede;"></div>
<div class="a" style="left:27.00px;top:512.00px;width:1861.00px;height:1.00px;background:#dedede;"></div>
<div class="a" style="left:27.00px;top:536.00px;width:1861.00px;height:1.00px;background:#dedede;"></div>
<div class="a" style="left:27.00px;top:560.00px;width:1861.00px;height:1.00px;background:#dedede;"></div>
<div class="a" style="left:27.00px;top:584.00px;width:1861.00px;height:1.00px;background:#dedede;"></div>
<div class="a" style="left:27.00px;top:608.00px;width:1861.00px;height:1.00px;background:#dedede;"></div>
<div class="a" style="left:27.00px;top:632.00px;width:1861.00px;height:1.00px;background:#dedede;"></div>
<div class="a" style="left:27.00px;top:656.00px;width:1861.00px;height:1.00px;background:#dedede;"></div>
<div class="a" style="left:27.00px;top:680.00px;width:1861.00px;height:1.00px;background:#dedede;"></div>
<div class="a" style="left:27.00px;top:704.00px;width:1861.00px;height:1.00px;background:#dedede;"></div>
<div class="a" style="left:27.00px;top:728.00px;width:1861.00px;height:1.00px;background:#dedede;"></div>
<div class="a" style="left:27.00px;top:752.00px;width:1861.00px;height:1.00px;background:#dedede;"></div>
<div class="a" style="left:27.00px;top:776.00px;width:1861.00px;height:1.00px;background:#dedede;"></div>
<div class="a" style="left:27.00px;top:800.00px;width:1861.00px;height:1.00px;background:#dedede;"></div>
<div class="a" style="left:27.00px;top:824.00px;width:1861.00px;height:1.00px;background:#dedede;"></div>
<div class="a" style="left:27.00px;top:848.00px;width:1861.00px;height:1.00px;background:#dedede;"></div>
<div class="a" style="left:27.00px;top:872.00px;width:1861.00px;height:1.00px;background:#dedede;"></div>
<div class="a" style="left:152.00px;top:211.00px;width:1.00px;height:17.00px;background:#d9d9d9;"></div>
<div class="a" style="left:293.00px;top:211.00px;width:1.00px;height:17.00px;background:#d9d9d9;"></div>
<div class="a" style="left:425.00px;top:211.00px;width:1.00px;height:17.00px;background:#d9d9d9;"></div>
<div class="a" style="left:505.00px;top:211.00px;width:1.00px;height:17.00px;background:#d9d9d9;"></div>
<div class="a" style="left:585.00px;top:211.00px;width:1.00px;height:17.00px;background:#d9d9d9;"></div>
<div class="a" style="left:665.00px;top:211.00px;width:1.00px;height:17.00px;background:#d9d9d9;"></div>
<div class="a" style="left:745.00px;top:211.00px;width:1.00px;height:17.00px;background:#d9d9d9;"></div>
<div class="a" style="left:825.00px;top:211.00px;width:1.00px;height:17.00px;background:#d9d9d9;"></div>
<div class="a" style="left:905.00px;top:211.00px;width:1.00px;height:17.00px;background:#d9d9d9;"></div>
<div class="a" style="left:985.00px;top:211.00px;width:1.00px;height:17.00px;background:#d9d9d9;"></div>
<div class="a" style="left:1065.00px;top:211.00px;width:1.00px;height:17.00px;background:#d9d9d9;"></div>
<div class="a" style="left:1145.00px;top:211.00px;width:1.00px;height:17.00px;background:#d9d9d9;"></div>
<div class="a" style="left:1225.00px;top:211.00px;width:1.00px;height:17.00px;background:#d9d9d9;"></div>
<div class="a" style="left:1305.00px;top:211.00px;width:1.00px;height:17.00px;background:#d9d9d9;"></div>
<div class="a" style="left:1385.00px;top:211.00px;width:1.00px;height:17.00px;background:#d9d9d9;"></div>
<div class="a" style="left:1465.00px;top:211.00px;width:1.00px;height:17.00px;background:#d9d9d9;"></div>
<div class="a" style="left:1545.00px;top:211.00px;width:1.00px;height:17.00px;background:#d9d9d9;"></div>
<div class="a" style="left:1625.00px;top:211.00px;width:1.00px;height:17.00px;background:#d9d9d9;"></div>
<div class="a" style="left:1705.00px;top:211.00px;width:1.00px;height:17.00px;background:#d9d9d9;"></div>
<div class="a" style="left:1785.00px;top:211.00px;width:1.00px;height:17.00px;background:#d9d9d9;"></div>
<div class="a" style="left:1865.00px;top:211.00px;width:1.00px;height:17.00px;background:#d9d9d9;"></div>
<div class="a" style="left:0.00px;top:274.00px;width:26.00px;height:1.00px;background:#dedede;"></div>
<div class="a" style="left:0.00px;top:299.00px;width:26.00px;height:1.00px;background:#dedede;"></div>
<div class="a" style="left:0.00px;top:324.00px;width:26.00px;height:1.00px;background:#dedede;"></div>
<div class="a" style="left:0.00px;top:370.00px;width:26.00px;height:1.00px;background:#dedede;"></div>
<div class="a" style="left:0.00px;top:416.00px;width:26.00px;height:1.00px;background:#dedede;"></div>
<div class="a" style="left:0.00px;top:440.00px;width:26.00px;height:1.00px;background:#dedede;"></div>
<div class="a" style="left:0.00px;top:464.00px;width:26.00px;height:1.00px;background:#dedede;"></div>
<div class="a" style="left:0.00px;top:488.00px;width:26.00px;height:1.00px;background:#dedede;"></div>
<div class="a" style="left:0.00px;top:512.00px;width:26.00px;height:1.00px;background:#dedede;"></div>
<div class="a" style="left:0.00px;top:536.00px;width:26.00px;height:1.00px;background:#dedede;"></div>
<div class="a" style="left:0.00px;top:560.00px;width:26.00px;height:1.00px;background:#dedede;"></div>
<div class="a" style="left:0.00px;top:584.00px;width:26.00px;height:1.00px;background:#dedede;"></div>
<div class="a" style="left:0.00px;top:608.00px;width:26.00px;height:1.00px;background:#dedede;"></div>
<div class="a" style="left:0.00px;top:632.00px;width:26.00px;height:1.00px;background:#dedede;"></div>
<div class="a" style="left:0.00px;top:656.00px;width:26.00px;height:1.00px;background:#dedede;"></div>
<div class="a" style="left:0.00px;top:680.00px;width:26.00px;height:1.00px;background:#dedede;"></div>
<div class="a" style="left:0.00px;top:704.00px;width:26.00px;height:1.00px;background:#dedede;"></div>
<div class="a" style="left:0.00px;top:728.00px;width:26.00px;height:1.00px;background:#dedede;"></div>
<div class="a" style="left:0.00px;top:752.00px;width:26.00px;height:1.00px;background:#dedede;"></div>
<div class="a" style="left:0.00px;top:776.00px;width:26.00px;height:1.00px;background:#dedede;"></div>
<div class="a" style="left:0.00px;top:800.00px;width:26.00px;height:1.00px;background:#dedede;"></div>
<div class="a" style="left:0.00px;top:824.00px;width:26.00px;height:1.00px;background:#dedede;"></div>
<div class="a" style="left:0.00px;top:848.00px;width:26.00px;height:1.00px;background:#dedede;"></div>
<div class="a" style="left:0.00px;top:872.00px;width:26.00px;height:1.00px;background:#dedede;"></div>
<div class="a" style="left:153.00px;top:205.00px;width:141.00px;height:23.00px;background:#dcdcdc;"></div>
<div class="a" style="left:0.00px;top:275.00px;width:26.00px;height:142.00px;background:#dcdcdc;"></div>
<div class="a" style="left:0.00px;top:299.00px;width:26.00px;height:1.00px;background:#cbcbcb;"></div>
<div class="a" style="left:0.00px;top:324.00px;width:26.00px;height:1.00px;background:#cbcbcb;"></div>
<div class="a" style="left:0.00px;top:370.00px;width:26.00px;height:1.00px;background:#cbcbcb;"></div>
<div class="a" style="left:0.00px;top:228.00px;width:1888.00px;height:1.00px;background:#a6a6a6;"></div>
<div class="a" style="left:26.00px;top:229.00px;width:1.00px;height:659.00px;background:#a6a6a6;"></div>
<div class="a" style="left:152.00px;top:227.00px;width:142.00px;height:2.00px;background:#217346;"></div>
<div class="a" style="left:25.00px;top:273.00px;width:2.00px;height:145.00px;background:#217346;"></div>
<svg class="a" style="left:7.00px;top:209.00px;" width="18" height="17" viewBox="0 0 18 17" fill="none"><path d="M16 1.4v14.2H1.8z" fill="#d8d8d8"/></svg>
<div class="t" style="left:85.10px;top:210.00px;font-size:15.00px;line-height:15.00px;letter-spacing:0.000px;color:#444444;font-family:'Liberation Sans',sans-serif;">A</div>
<div class="t" style="left:218.60px;top:210.00px;font-size:15.00px;line-height:15.00px;letter-spacing:0.000px;color:#217346;font-family:'Liberation Sans',sans-serif;">B</div>
<div class="t" style="left:354.68px;top:210.00px;font-size:15.00px;line-height:15.00px;letter-spacing:0.000px;color:#444444;font-family:'Liberation Sans',sans-serif;">C</div>
<div class="t" style="left:460.68px;top:210.00px;font-size:15.00px;line-height:15.00px;letter-spacing:0.000px;color:#444444;font-family:'Liberation Sans',sans-serif;">D</div>
<div class="t" style="left:541.10px;top:210.00px;font-size:15.00px;line-height:15.00px;letter-spacing:0.000px;color:#444444;font-family:'Liberation Sans',sans-serif;">E</div>
<div class="t" style="left:621.52px;top:210.00px;font-size:15.00px;line-height:15.00px;letter-spacing:0.000px;color:#444444;font-family:'Liberation Sans',sans-serif;">F</div>
<div class="t" style="left:700.27px;top:210.00px;font-size:15.00px;line-height:15.00px;letter-spacing:0.000px;color:#444444;font-family:'Liberation Sans',sans-serif;">G</div>
<div class="t" style="left:780.68px;top:210.00px;font-size:15.00px;line-height:15.00px;letter-spacing:0.000px;color:#444444;font-family:'Liberation Sans',sans-serif;">H</div>
<div class="t" style="left:864.02px;top:210.00px;font-size:15.00px;line-height:15.00px;letter-spacing:0.000px;color:#444444;font-family:'Liberation Sans',sans-serif;">I</div>
<div class="t" style="left:942.35px;top:210.00px;font-size:15.00px;line-height:15.00px;letter-spacing:0.000px;color:#444444;font-family:'Liberation Sans',sans-serif;">J</div>
<div class="t" style="left:1021.10px;top:210.00px;font-size:15.00px;line-height:15.00px;letter-spacing:0.000px;color:#444444;font-family:'Liberation Sans',sans-serif;">K</div>
<div class="t" style="left:1101.93px;top:210.00px;font-size:15.00px;line-height:15.00px;letter-spacing:0.000px;color:#444444;font-family:'Liberation Sans',sans-serif;">L</div>
<div class="t" style="left:1179.85px;top:210.00px;font-size:15.00px;line-height:15.00px;letter-spacing:0.000px;color:#444444;font-family:'Liberation Sans',sans-serif;">M</div>
<div class="t" style="left:1260.68px;top:210.00px;font-size:15.00px;line-height:15.00px;letter-spacing:0.000px;color:#444444;font-family:'Liberation Sans',sans-serif;">N</div>
<div class="t" style="left:1340.27px;top:210.00px;font-size:15.00px;line-height:15.00px;letter-spacing:0.000px;color:#444444;font-family:'Liberation Sans',sans-serif;">O</div>
<div class="t" style="left:1421.10px;top:210.00px;font-size:15.00px;line-height:15.00px;letter-spacing:0.000px;color:#444444;font-family:'Liberation Sans',sans-serif;">P</div>
<div class="t" style="left:1500.27px;top:210.00px;font-size:15.00px;line-height:15.00px;letter-spacing:0.000px;color:#444444;font-family:'Liberation Sans',sans-serif;">Q</div>
<div class="t" style="left:1580.68px;top:210.00px;font-size:15.00px;line-height:15.00px;letter-spacing:0.000px;color:#444444;font-family:'Liberation Sans',sans-serif;">R</div>
<div class="t" style="left:1661.10px;top:210.00px;font-size:15.00px;line-height:15.00px;letter-spacing:0.000px;color:#444444;font-family:'Liberation Sans',sans-serif;">S</div>
<div class="t" style="left:1741.52px;top:210.00px;font-size:15.00px;line-height:15.00px;letter-spacing:0.000px;color:#444444;font-family:'Liberation Sans',sans-serif;">T</div>
<div class="t" style="left:1820.68px;top:210.00px;font-size:15.00px;line-height:15.00px;letter-spacing:0.000px;color:#444444;font-family:'Liberation Sans',sans-serif;">U</div>
<div class="t" style="left:5.50px;top:255.00px;font-size:15.00px;line-height:15.00px;letter-spacing:0.000px;color:#444444;font-family:'Liberation Sans',sans-serif;">1</div>
<div class="t" style="left:5.50px;top:280.00px;font-size:15.00px;line-height:15.00px;letter-spacing:0.000px;color:#217346;font-family:'Liberation Sans',sans-serif;">2</div>
<div class="t" style="left:5.50px;top:305.00px;font-size:15.00px;line-height:15.00px;letter-spacing:0.000px;color:#217346;font-family:'Liberation Sans',sans-serif;">3</div>
<div class="t" style="left:5.50px;top:351.00px;font-size:15.00px;line-height:15.00px;letter-spacing:0.000px;color:#217346;font-family:'Liberation Sans',sans-serif;">4</div>
<div class="t" style="left:5.50px;top:397.00px;font-size:15.00px;line-height:15.00px;letter-spacing:0.000px;color:#217346;font-family:'Liberation Sans',sans-serif;">5</div>
<div class="t" style="left:5.50px;top:422.00px;font-size:15.00px;line-height:15.00px;letter-spacing:0.000px;color:#444444;font-family:'Liberation Sans',sans-serif;">6</div>
<div class="t" style="left:5.50px;top:446.00px;font-size:15.00px;line-height:15.00px;letter-spacing:0.000px;color:#444444;font-family:'Liberation Sans',sans-serif;">7</div>
<div class="t" style="left:5.50px;top:470.00px;font-size:15.00px;line-height:15.00px;letter-spacing:0.000px;color:#444444;font-family:'Liberation Sans',sans-serif;">8</div>
<div class="t" style="left:5.50px;top:494.00px;font-size:15.00px;line-height:15.00px;letter-spacing:0.000px;color:#444444;font-family:'Liberation Sans',sans-serif;">9</div>
<div class="t" style="left:1.50px;top:518.00px;font-size:15.00px;line-height:15.00px;letter-spacing:0.715px;color:#444444;font-family:'Liberation Sans',sans-serif;">10</div>
<div class="t" style="left:1.50px;top:542.00px;font-size:15.00px;line-height:15.00px;letter-spacing:1.828px;color:#444444;font-family:'Liberation Sans',sans-serif;">11</div>
<div class="t" style="left:1.50px;top:566.00px;font-size:15.00px;line-height:15.00px;letter-spacing:0.715px;color:#444444;font-family:'Liberation Sans',sans-serif;">12</div>
<div class="t" style="left:1.50px;top:590.00px;font-size:15.00px;line-height:15.00px;letter-spacing:0.715px;color:#444444;font-family:'Liberation Sans',sans-serif;">13</div>
<div class="t" style="left:1.50px;top:614.00px;font-size:15.00px;line-height:15.00px;letter-spacing:0.715px;color:#444444;font-family:'Liberation Sans',sans-serif;">14</div>
<div class="t" style="left:1.50px;top:638.00px;font-size:15.00px;line-height:15.00px;letter-spacing:0.715px;color:#444444;font-family:'Liberation Sans',sans-serif;">15</div>
<div class="t" style="left:1.50px;top:662.00px;font-size:15.00px;line-height:15.00px;letter-spacing:0.715px;color:#444444;font-family:'Liberation Sans',sans-serif;">16</div>
<div class="t" style="left:1.50px;top:686.00px;font-size:15.00px;line-height:15.00px;letter-spacing:0.715px;color:#444444;font-family:'Liberation Sans',sans-serif;">17</div>
<div class="t" style="left:1.50px;top:710.00px;font-size:15.00px;line-height:15.00px;letter-spacing:0.715px;color:#444444;font-family:'Liberation Sans',sans-serif;">18</div>
<div class="t" style="left:1.50px;top:734.00px;font-size:15.00px;line-height:15.00px;letter-spacing:0.715px;color:#444444;font-family:'Liberation Sans',sans-serif;">19</div>
<div class="t" style="left:1.50px;top:758.00px;font-size:15.00px;line-height:15.00px;letter-spacing:0.715px;color:#444444;font-family:'Liberation Sans',sans-serif;">20</div>
<div class="t" style="left:1.50px;top:782.00px;font-size:15.00px;line-height:15.00px;letter-spacing:0.715px;color:#444444;font-family:'Liberation Sans',sans-serif;">21</div>
<div class="t" style="left:1.50px;top:806.00px;font-size:15.00px;line-height:15.00px;letter-spacing:0.715px;color:#444444;font-family:'Liberation Sans',sans-serif;">22</div>
<div class="t" style="left:1.50px;top:830.00px;font-size:15.00px;line-height:15.00px;letter-spacing:0.715px;color:#444444;font-family:'Liberation Sans',sans-serif;">23</div>
<div class="t" style="left:1.50px;top:854.00px;font-size:15.00px;line-height:15.00px;letter-spacing:0.715px;color:#444444;font-family:'Liberation Sans',sans-serif;">24</div>
<div class="t" style="left:1.50px;top:878.00px;font-size:15.00px;line-height:15.00px;letter-spacing:0.715px;color:#444444;font-family:'Liberation Sans',sans-serif;">25</div>
<div class="a" style="left:27.00px;top:273.00px;width:399.00px;height:2.00px;background:#c8c8c8;"></div>
<div class="a" style="left:27.00px;top:298.00px;width:399.00px;height:2.00px;background:#c8c8c8;"></div>
<div class="a" style="left:27.00px;top:323.00px;width:399.00px;height:2.00px;background:#c8c8c8;"></div>
<div class="a" style="left:27.00px;top:369.00px;width:399.00px;height:2.00px;background:#c8c8c8;"></div>
<div class="a" style="left:27.00px;top:415.00px;width:399.00px;height:2.00px;background:#c8c8c8;"></div>
<div class="a" style="left:151.00px;top:229.00px;width:2.00px;height:188.00px;background:#c8c8c8;"></div>
<div class="a" style="left:292.00px;top:229.00px;width:2.00px;height:188.00px;background:#c8c8c8;"></div>
<div class="a" style="left:424.00px;top:229.00px;width:2.00px;height:188.00px;background:#c8c8c8;"></div>
<div class="a" style="left:154.00px;top:300.00px;width:138.00px;height:115.00px;background:#c8c8c8;"></div>
<div class="a" style="left:154.00px;top:298.00px;width:138.00px;height:2.00px;background:#adadad;"></div>
<div class="a" style="left:154.00px;top:323.00px;width:138.00px;height:2.00px;background:#adadad;"></div>
<div class="a" style="left:154.00px;top:369.00px;width:138.00px;height:2.00px;background:#adadad;"></div>
<div class="a" style="left:153.00px;top:298.00px;width:1.00px;height:118.00px;background:#fff;"></div>
<div class="a" style="left:292.00px;top:275.00px;width:1.00px;height:141.00px;background:#fff;"></div>
<div class="a" style="left:153.00px;top:415.00px;width:140.00px;height:1.00px;background:#fff;"></div>
<div class="a" style="left:151.00px;top:273.00px;width:144.00px;height:145.00px;border:2px solid #217346;"></div>
<div class="a" style="left:291.50px;top:414.50px;width:6.40px;height:6.40px;background:#217346;border:1px solid #fff;"></div>
<div class="t" style="left:30.00px;top:252.00px;font-size:16.30px;line-height:16.30px;letter-spacing:0.076px;color:#000;font-family:'Liberation Sans',sans-serif;font-weight:bold;">Клиент</div>
<div class="t" style="left:156.00px;top:252.00px;font-size:16.30px;line-height:16.30px;letter-spacing:0.230px;color:#000;font-family:'Liberation Sans',sans-serif;font-weight:bold;">В работе</div>
<div class="t" style="left:297.00px;top:252.00px;font-size:16.30px;line-height:16.30px;letter-spacing:0.437px;color:#000;font-family:'Liberation Sans',sans-serif;">Исполнитель</div>
<div class="t" style="left:30.10px;top:277.00px;font-size:16.30px;line-height:16.30px;letter-spacing:0.123px;color:#000;font-family:'Liberation Sans',sans-serif;">Иванов</div>
<div class="t" style="left:297.00px;top:277.00px;font-size:16.30px;line-height:16.30px;letter-spacing:-0.087px;color:#000;font-family:'Liberation Sans',sans-serif;">Юрьев</div>
<div class="t" style="left:30.10px;top:302.00px;font-size:16.30px;line-height:16.30px;letter-spacing:0.043px;color:#000;font-family:'Liberation Sans',sans-serif;">Сидоров</div>
<div class="t" style="left:297.00px;top:302.00px;font-size:16.30px;line-height:16.30px;letter-spacing:0.286px;color:#000;font-family:'Liberation Sans',sans-serif;">Гагович</div>
<div class="t" style="left:30.10px;top:348.00px;font-size:16.30px;line-height:16.30px;letter-spacing:0.041px;color:#000;font-family:'Liberation Sans',sans-serif;">Петров</div>
<div class="t" style="left:297.00px;top:348.00px;font-size:16.30px;line-height:16.30px;letter-spacing:0.197px;color:#000;font-family:'Liberation Sans',sans-serif;">Клементьев</div>
<div class="t" style="left:30.10px;top:393.00px;font-size:16.30px;line-height:16.30px;letter-spacing:0.225px;color:#000;font-family:'Liberation Sans',sans-serif;">Васильев</div>
<div class="t" style="left:297.00px;top:393.00px;font-size:16.30px;line-height:16.30px;letter-spacing:0.137px;color:#000;font-family:'Liberation Sans',sans-serif;">Братков</div>
<div class="a" style="left:0.00px;top:888.00px;width:1909.00px;height:6.00px;background:linear-gradient(90deg,#e5eae1 0%,#e8eae5 30%,#e9e9e6 100%);"></div>
<div class="a" style="left:127.00px;top:888.00px;width:86.00px;height:6.00px;background:#ffffff;"></div>
<div class="a" style="left:125.50px;top:888.00px;width:8.00px;height:6.00px;background:#e5eae1;border-top-right-radius:6px;"></div>
<div class="a" style="left:206.50px;top:888.00px;width:8.00px;height:6.00px;background:#e6eae2;border-top-left-radius:6px;"></div>
<div class="a" style="left:774.20px;top:229.20px;width:585.80px;height:409.40px;background:#f2f2f2;border-radius:8px;box-shadow:0 0 0 0.7px rgba(0,0,0,0.22),0 24px 54px rgba(0,0,0,0.29),0 4px 20px rgba(0,0,0,0.11);"></div>
<div class="a" style="left:774.20px;top:229.20px;width:585.80px;height:46.00px;border-radius:8px 8px 0 0;background:linear-gradient(180deg,rgba(242,242,242,0) 55%,#f2f2f2 100%),linear-gradient(90deg,#fbf3ef 0%,#fbf1ec 35%,#f7f5ef 70%,#f2f6ee 100%);"></div>
<div class="t" style="left:783.50px;top:240.00px;font-size:15.20px;line-height:15.20px;letter-spacing:-0.076px;color:#1b1b1b;font-family:'Liberation Sans',sans-serif;">Проверка вводимых значений</div>
<div class="t" style="left:1268.69px;top:240.00px;font-size:15.50px;line-height:15.50px;letter-spacing:0.000px;color:#1b1b1b;font-family:'Liberation Sans',sans-serif;">?</div>
<svg class="a" style="left:1322.00px;top:239.50px;" width="16" height="16" viewBox="0 0 16 16" fill="none"><path d="M2 2l12 12M14 2L2 14" stroke="#1b1b1b" stroke-width="1.25" stroke-linecap="round"/></svg>
<div class="a" style="left:880.20px;top:279.40px;width:145.00px;height:23.40px;background:#f0f0f0;border:1px solid #e6e6e6;border-bottom:none;"></div>
<div class="a" style="left:1024.80px;top:279.40px;width:167.60px;height:23.40px;background:#f0f0f0;border:1px solid #e6e6e6;border-bottom:none;"></div>
<div class="a" style="left:783.80px;top:302.40px;width:564.00px;height:284.00px;background:#f9f9f9;border:1px solid #ececec;border-radius:0 4px 4px 4px;"></div>
<div class="a" style="left:784.00px;top:276.00px;width:96.40px;height:27.60px;background:#f9f9f9;border:1px solid #ececec;border-bottom:none;border-radius:4px 4px 0 0;"></div>
<div class="t" style="left:796.30px;top:285.00px;font-size:12.70px;line-height:12.70px;letter-spacing:0.100px;color:#1b1b1b;font-family:'Liberation Sans',sans-serif;">Параметры</div>
<div class="t" style="left:892.30px;top:285.00px;font-size:12.70px;line-height:12.70px;letter-spacing:0.203px;color:#1b1b1b;font-family:'Liberation Sans',sans-serif;">Подсказка по вводу</div>
<div class="t" style="left:1038.20px;top:285.00px;font-size:12.70px;line-height:12.70px;letter-spacing:0.373px;color:#1b1b1b;font-family:'Liberation Sans',sans-serif;">Сообщение об ошибке</div>
<div class="t" style="left:796.90px;top:319.00px;font-size:12.70px;line-height:12.70px;letter-spacing:0.247px;color:#1b1b1b;font-family:'Liberation Sans',sans-serif;">Условие проверки</div>
<div class="a" style="left:913.40px;top:323.40px;width:422.60px;height:1.00px;background:#dcdcdc;"></div>
<div class="t" style="left:811.30px;top:345.00px;font-size:12.70px;line-height:12.70px;letter-spacing:-0.171px;color:#1b1b1b;font-family:'Liberation Sans',sans-serif;">Тип данных:</div>
<div class="a" style="left:811.30px;top:357.00px;width:7.20px;height:1.00px;background:#1b1b1b;"></div>
<div class="a" style="left:811.30px;top:362.60px;width:161.20px;height:26.60px;background:#fff;border:1px solid #a8a8a8;border-bottom-color:#6e6e6e;"></div>
<div class="a" style="left:951.40px;top:362.60px;width:21.20px;height:26.60px;background:#cce4f7;border:1px solid #0078d4;"></div>
<svg class="a" style="left:955.80px;top:371.40px;" width="12" height="10" viewBox="0 0 12 10" fill="none"><path d="M2.4 3l3.7 3.7L9.8 3" stroke="#555" stroke-width="1.1" stroke-linecap="round" stroke-linejoin="round"/></svg>
<div class="t" style="left:816.20px;top:371.00px;font-size:12.70px;line-height:12.70px;letter-spacing:0.318px;color:#1b1b1b;font-family:'Liberation Sans',sans-serif;">Любое значение</div>
<div class="a" style="left:987.20px;top:364.20px;width:15.40px;height:15.40px;background:#c9c9c9;border-radius:3.5px;"></div>
<svg class="a" style="left:987.20px;top:364.20px;" width="15.4" height="15.4" viewBox="0 0 15.4 15.4" fill="none"><path d="M3.800 7.900l2.800 2.800 5-5.600" stroke="#fff" stroke-width="1.5" stroke-linecap="round" stroke-linejoin="round"/></svg>
<div class="t" style="left:1008.60px;top:368.00px;font-size:12.70px;line-height:12.70px;letter-spacing:0.178px;color:#8c8c8c;font-family:'Liberation Sans',sans-serif;">Игнорировать пустые ячейки</div>
<div class="a" style="left:811.00px;top:388.80px;width:162.00px;height:138.00px;background:#fff;border:1px solid #5a5a5a;"></div>
<div class="a" style="left:812.00px;top:441.40px;width:160.00px;height:16.20px;background:#0c6cd0;"></div>
<div class="t" style="left:815.20px;top:394.00px;font-size:12.70px;line-height:12.70px;letter-spacing:0.303px;color:#111;font-family:'Liberation Sans',sans-serif;">Любое значение</div>
<div class="t" style="left:815.20px;top:411.00px;font-size:12.70px;line-height:12.70px;letter-spacing:0.138px;color:#111;font-family:'Liberation Sans',sans-serif;">Целое число</div>
<div class="t" style="left:815.20px;top:428.00px;font-size:12.70px;line-height:12.70px;letter-spacing:-0.081px;color:#111;font-family:'Liberation Sans',sans-serif;">Действительное</div>
<div class="t" style="left:815.20px;top:445.00px;font-size:12.70px;line-height:12.70px;letter-spacing:0.029px;color:#ffffff;font-family:'Liberation Sans',sans-serif;">Список</div>
<div class="t" style="left:815.20px;top:462.00px;font-size:12.70px;line-height:12.70px;letter-spacing:-0.275px;color:#111;font-family:'Liberation Sans',sans-serif;">Дата</div>
<div class="t" style="left:815.20px;top:479.00px;font-size:12.70px;line-height:12.70px;letter-spacing:-0.102px;color:#111;font-family:'Liberation Sans',sans-serif;">Время</div>
<div class="t" style="left:815.20px;top:496.00px;font-size:12.70px;line-height:12.70px;letter-spacing:-0.140px;color:#111;font-family:'Liberation Sans',sans-serif;">Длина текста</div>
<div class="t" style="left:815.20px;top:513.00px;font-size:12.70px;line-height:12.70px;letter-spacing:0.483px;color:#111;font-family:'Liberation Sans',sans-serif;">Другой</div>
<div class="a" style="left:797.30px;top:556.90px;width:15.40px;height:15.40px;background:#fdfdfd;border:1px solid #c2c2c2;border-radius:3.5px;"></div>
<div class="t" style="left:818.30px;top:561.00px;font-size:12.70px;line-height:12.70px;letter-spacing:0.072px;color:#8c8c8c;font-family:'Liberation Sans',sans-serif;">Распространить изменения на другие ячейки с тем же условием</div>
<div class="a" style="left:783.40px;top:600.60px;width:111.20px;height:28.20px;background:#fdfdfd;border:1px solid #d9d9d9;border-bottom-color:#c6c6c6;border-radius:4.5px;"></div>
<div class="t" style="left:800.50px;top:610.00px;font-size:12.70px;line-height:12.70px;letter-spacing:-0.157px;color:#1b1b1b;font-family:'Liberation Sans',sans-serif;">Очистить все</div>
<div class="a" style="left:809.60px;top:622.40px;width:6.60px;height:1.00px;background:#1b1b1b;"></div>
<div class="a" style="left:1111.10px;top:600.00px;width:112.00px;height:29.00px;background:#fdfdfd;border:1.8px solid #2573c2;border-radius:5px;"></div>
<div class="t" style="left:1158.60px;top:610.00px;font-size:12.70px;line-height:12.70px;letter-spacing:0.324px;color:#1b1b1b;font-family:'Liberation Sans',sans-serif;">ОК</div>
<div class="a" style="left:1238.60px;top:600.60px;width:110.60px;height:28.20px;background:#fdfdfd;border:1px solid #d9d9d9;border-bottom-color:#c6c6c6;border-radius:4.5px;"></div>
<div class="t" style="left:1271.60px;top:610.00px;font-size:12.70px;line-height:12.70px;letter-spacing:-0.253px;color:#1b1b1b;font-family:'Liberation Sans',sans-serif;">Отмена</div>
</div></body></html>
